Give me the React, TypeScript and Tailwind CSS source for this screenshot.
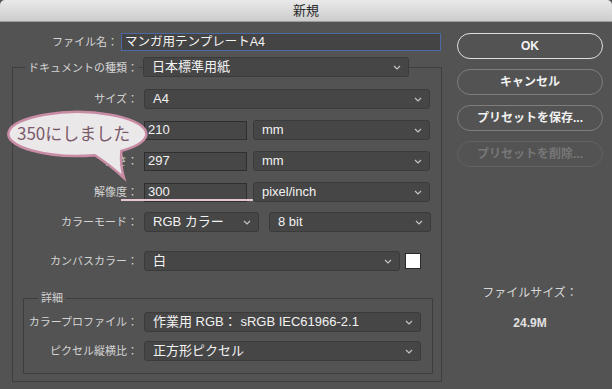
import React from 'react';

const jp = { fontFamily: '"Liberation Sans", "Noto Sans CJK JP", sans-serif' };

function Chevron() {
  return (
    <svg width="8" height="5" viewBox="0 0 8 5" className="shrink-0">
      <path d="M1 1l3 3 3-3" stroke="#c4c4c4" strokeWidth="1.2" fill="none" />
    </svg>
  );
}

function Select({ w, value }: { w: string; value: string }) {
  return (
    <div
      className={`${w} h-[20px] shrink-0 flex items-center justify-between rounded-[3px] border border-[#3b3b3b] bg-[#464646] pl-[8px] pr-[7px] text-[13px] text-[#f2f2f2]`}
    >
      <span className="whitespace-nowrap">{value}</span>
      <Chevron />
    </div>
  );
}

function TextBox({ w, value }: { w: string; value: string }) {
  return (
    <div
      className={`${w} h-[19px] shrink-0 flex items-center border border-[#2f2f2f] bg-[#474747] pl-[3px] text-[13px] text-[#f2f2f2]`}
    >
      {value}
    </div>
  );
}

function Label({ w, text }: { w: string; text: string }) {
  return (
    <div className={`${w} shrink-0 text-right text-[11px] text-[#d4d4d4] whitespace-nowrap`}>{text}</div>
  );
}

function PillButton({ text, kind }: { text: string; kind: 'ok' | 'normal' | 'disabled' }) {
  const cls =
    kind === 'ok'
      ? 'border-[1.5px] border-[#dedede] text-[#f4f4f4]'
      : kind === 'normal'
        ? 'border border-[#7e7e7e] text-[#f0f0f0]'
        : 'border border-[#616161] text-[#777777]';
  return (
    <div className={`h-[26px] w-[146px] rounded-full flex items-center justify-center text-[12px] font-bold ${cls}`}>
      {text}
    </div>
  );
}

export default function App() {
  return (
    <div className="relative w-[612px] h-[389px] overflow-hidden bg-[#535353]" style={jp}>
      {/* title bar */}
      <div className="h-[22px] flex items-center justify-center rounded-t-[5px] border-b border-[#9c9c9c] bg-gradient-to-b from-[#e9e9e9] to-[#cdcdcd] text-[13px] text-[#2a2a2a]">
        新規
      </div>

      <div className="flex">
        {/* left side */}
        <div className="w-[445px] pt-[11px]">
          <div className="flex items-center h-[18px]">
            <Label w="w-[118px]" text="ファイル名：" />
            <div className="ml-[3px] w-[320px] h-[18px] flex items-center border border-[#4b6aa3] bg-[#444444] pl-[3px] text-[12.5px] text-[#f4f4f4]">
              マンガ用テンプレートA4
            </div>
          </div>

          {/* document group */}
          <div className="mt-[16px] ml-[12px] w-[430px] h-[315px] border border-[#3e3e3e]">
            <div className="-mt-[11px] flex items-center h-[20px]">
              <div className="w-[125px] shrink-0 text-right">
                <span className="bg-[#535353] pl-[3px] text-[11px] text-[#d4d4d4] whitespace-nowrap">ドキュメントの種類：</span>
              </div>
              <div className="ml-[5px]">
                <Select w="w-[266px]" value="日本標準用紙" />
              </div>
            </div>

            <div className="mt-[12px] flex items-center">
              <Label w="w-[125px]" text="サイズ：" />
              <div className="ml-[6px]">
                <Select w="w-[286px]" value="A4" />
              </div>
            </div>

            <div className="mt-[11px] flex items-center">
              <Label w="w-[125px]" text="幅：" />
              <div className="ml-[6px] flex items-center gap-[6px]">
                <TextBox w="w-[103px]" value="210" />
                <Select w="w-[177px]" value="mm" />
              </div>
            </div>

            <div className="mt-[11px] flex items-center">
              <Label w="w-[125px]" text="高さ：" />
              <div className="ml-[6px] flex items-center gap-[6px]">
                <TextBox w="w-[103px]" value="297" />
                <Select w="w-[177px]" value="mm" />
              </div>
            </div>

            <div className="mt-[11px] flex items-center">
              <Label w="w-[125px]" text="解像度：" />
              <div className="ml-[6px] flex items-center gap-[6px]">
                <TextBox w="w-[103px]" value="300" />
                <Select w="w-[177px]" value="pixel/inch" />
              </div>
            </div>

            <div className="mt-[10px] flex items-center">
              <Label w="w-[125px]" text="カラーモード：" />
              <div className="ml-[6px] flex items-center gap-[10px]">
                <Select w="w-[115px]" value="RGB カラー" />
                <Select w="w-[162px]" value="8 bit" />
              </div>
            </div>

            <div className="mt-[19px] flex items-center">
              <Label w="w-[125px]" text="カンバスカラー：" />
              <div className="ml-[6px] flex items-center gap-[5px]">
                <Select w="w-[256px]" value="白" />
                <div className="w-[16px] h-[16px] border border-[#2a2a2a] bg-white" />
              </div>
            </div>

            {/* detail group */}
            <div className="mt-[27px] ml-[10px] w-[410px] h-[76px] border border-[#3e3e3e]">
              <div className="-mt-[8px] ml-[14px] h-[15px] flex items-center">
                <span className="bg-[#535353] px-[3px] text-[11px] text-[#d0d0d0]">詳細</span>
              </div>
              <div className="mt-[6px] flex items-center">
                <Label w="w-[114px]" text="カラープロファイル：" />
                <div className="ml-[6px]">
                  <Select w="w-[277px]" value="作業用 RGB： sRGB IEC61966-2.1" />
                </div>
              </div>
              <div className="mt-[9px] flex items-center">
                <Label w="w-[114px]" text="ピクセル縦横比：" />
                <div className="ml-[6px]">
                  <Select w="w-[277px]" value="正方形ピクセル" />
                </div>
              </div>
            </div>
          </div>
        </div>

        {/* right side */}
        <div className="ml-[12px] pt-[11px] flex flex-col gap-[10px]">
          <PillButton text="OK" kind="ok" />
          <PillButton text="キャンセル" kind="normal" />
          <PillButton text="プリセットを保存..." kind="normal" />
          <PillButton text="プリセットを削除..." kind="disabled" />
          <div className="mt-[107px] w-[146px] flex flex-col items-center text-[12px] text-[#d6d6d6]">
            <div>ファイルサイズ：</div>
            <div className="mt-[12px] font-semibold text-[#e2e2e2]">24.9M</div>
          </div>
        </div>
      </div>

      {/* annotation overlay */}
      <div className="absolute left-[121px] top-[199px] w-[132px] h-[2px] bg-[#e6c6d2]" />
      <div className="absolute left-0 top-[105px] w-[160px] h-[80px]">
        <svg width="160" height="80" viewBox="0 0 160 80">
          <path
            d="M121.4 45.9 Q120 60 124 73 Q110 60 94.9 50.25 A69 22 0 1 1 121.4 45.9 Z"
            fill="#ebe8ea"
            stroke="#c98ca5"
            strokeWidth="2.5"
          />
        </svg>
        <div
          className="absolute left-[17px] top-[19px] text-[17px] leading-none text-[#7a5a68] whitespace-nowrap"
          style={{ fontFamily: '"Noto Sans CJK JP", sans-serif' }}
        >
          350にしました
        </div>
      </div>
    </div>
  );
}
